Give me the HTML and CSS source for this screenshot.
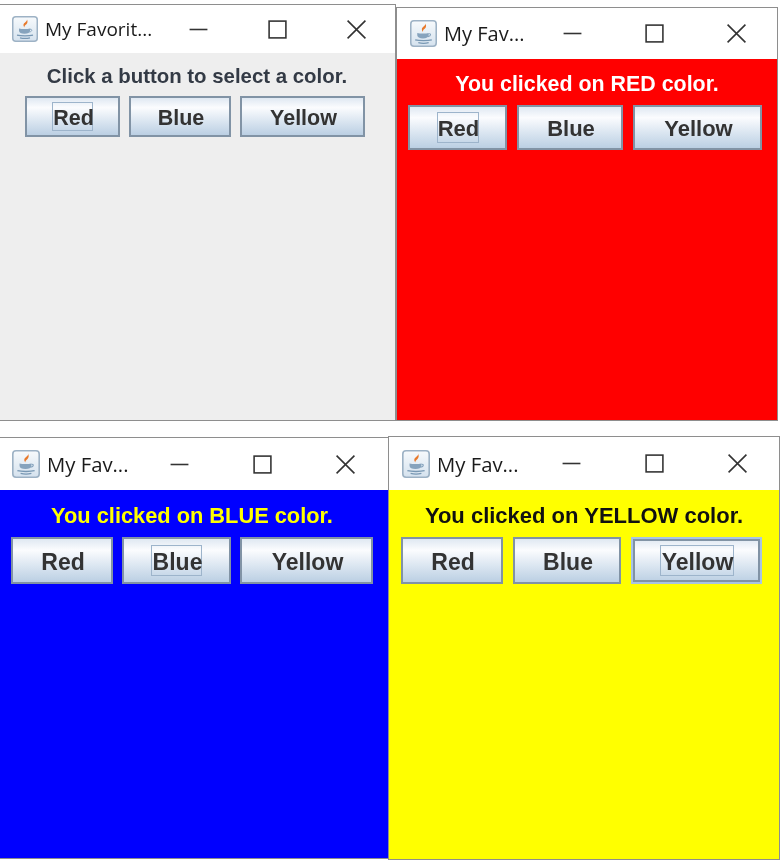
FILE: index.html
```html
<!DOCTYPE html>
<html lang="en">
<head>
    <meta charset="UTF-8">
    <meta name="viewport" content="width=device-width, initial-scale=1.0">
    <title>My Favorite Color</title>
    <link rel="stylesheet" href="styles.css">
</head>
<body>
    <svg class="sprite" width="0" height="0">
        <defs>
            <linearGradient id="icon-bg" x1="0" y1="0" x2="0" y2="1">
                <stop offset="0" stop-color="#f7fafc"/>
                <stop offset="1" stop-color="#d5e2ee"/>
            </linearGradient>
        </defs>
        <symbol id="java-icon" viewBox="0 0 26 26">
            <rect x="0.75" y="0.75" width="24.5" height="24.5" rx="3" fill="url(#icon-bg)" stroke="#9db2c5" stroke-width="1.500"/>
            <path d="M14.800 3c1.300 2.300-3.300 3.600-3.400 6 0 1 .5 1.800 1 2.500-.1-1.300.5-2 2-3.200 1.300-1.100 1.500-3.300.4-5.300z" fill="#e8792b"/>
            <path d="M7 12.500c2.800.8 8.200.8 11 0v2.200c0 2-2.200 3-5.500 3s-5.500-1-5.500-3z" fill="#86a3bd"/>
            <path d="M18 13.200c2.300-.4 2.700 2.300-.7 2.800" fill="none" stroke="#86a3bd" stroke-width="1"/>
            <path d="M5 19.200c3.800 1 12.200 1 16 0M8 21.800c2.500.6 7.500.6 10 0" fill="none" stroke="#7797b3" stroke-width="1.200"/>
        </symbol>
    </svg>

    <div class="window window-gray">
        <div class="titlebar">
            <svg class="app-icon"><use href="#java-icon"/></svg>
            <span class="title">My Favorit...</span>
            <div class="controls">
                <svg class="ctl" viewBox="0 0 20 20"><path d="M1.500 10h17"/></svg>
                <svg class="ctl" viewBox="0 0 20 20"><rect x="2" y="2" width="16" height="16"/></svg>
                <svg class="ctl" viewBox="0 0 20 20"><path d="M1.500 1.500l17 17M18.500 1.500l-17 17"/></svg>
            </div>
        </div>
        <div class="content">
            <p class="message">Click a button to select a color.</p>
            <div class="buttons">
                <button class="btn btn-red"><span class="focus"><span class="label">Red</span></span></button>
                <button class="btn btn-blue"><span class="label">Blue</span></button>
                <button class="btn btn-yellow"><span class="label">Yellow</span></button>
            </div>
        </div>
    </div>

    <div class="window window-red">
        <div class="titlebar">
            <svg class="app-icon"><use href="#java-icon"/></svg>
            <span class="title">My Fav...</span>
            <div class="controls">
                <svg class="ctl" viewBox="0 0 20 20"><path d="M1.500 10h17"/></svg>
                <svg class="ctl" viewBox="0 0 20 20"><rect x="2" y="2" width="16" height="16"/></svg>
                <svg class="ctl" viewBox="0 0 20 20"><path d="M1.500 1.500l17 17M18.500 1.500l-17 17"/></svg>
            </div>
        </div>
        <div class="content">
            <p class="message">You clicked on RED color.</p>
            <div class="buttons">
                <button class="btn btn-red"><span class="focus"><span class="label">Red</span></span></button>
                <button class="btn btn-blue"><span class="label">Blue</span></button>
                <button class="btn btn-yellow"><span class="label">Yellow</span></button>
            </div>
        </div>
    </div>

    <div class="window window-blue">
        <div class="titlebar">
            <svg class="app-icon"><use href="#java-icon"/></svg>
            <span class="title">My Fav...</span>
            <div class="controls">
                <svg class="ctl" viewBox="0 0 20 20"><path d="M1.500 10h17"/></svg>
                <svg class="ctl" viewBox="0 0 20 20"><rect x="2" y="2" width="16" height="16"/></svg>
                <svg class="ctl" viewBox="0 0 20 20"><path d="M1.500 1.500l17 17M18.500 1.500l-17 17"/></svg>
            </div>
        </div>
        <div class="content">
            <p class="message">You clicked on BLUE color.</p>
            <div class="buttons">
                <button class="btn btn-red"><span class="label">Red</span></button>
                <button class="btn btn-blue"><span class="focus"><span class="label">Blue</span></span></button>
                <button class="btn btn-yellow"><span class="label">Yellow</span></button>
            </div>
        </div>
    </div>

    <div class="window window-yellow">
        <div class="titlebar">
            <svg class="app-icon"><use href="#java-icon"/></svg>
            <span class="title">My Fav...</span>
            <div class="controls">
                <svg class="ctl" viewBox="0 0 20 20"><path d="M1.500 10h17"/></svg>
                <svg class="ctl" viewBox="0 0 20 20"><rect x="2" y="2" width="16" height="16"/></svg>
                <svg class="ctl" viewBox="0 0 20 20"><path d="M1.500 1.500l17 17M18.500 1.500l-17 17"/></svg>
            </div>
        </div>
        <div class="content">
            <p class="message">You clicked on YELLOW color.</p>
            <div class="buttons">
                <button class="btn btn-red"><span class="label">Red</span></button>
                <button class="btn btn-blue"><span class="label">Blue</span></button>
                <button class="btn btn-yellow btn-default"><span class="focus"><span class="label">Yellow</span></span></button>
            </div>
        </div>
    </div>
</body>
</html>
```

FILE: styles.css
```css
html, body {
    margin: 0;
    height: 100%;
    background: white;
    overflow: hidden;
}
.sprite {
    position: absolute;
}

/* windows sit on a free desktop, so these get absolute places */
.window {
    position: absolute;
    box-sizing: border-box;
    display: flex;
    flex-direction: column;
    border: 1px solid #8e8e8e;
    background: white;
    filter: blur(0.5px);
}
.window-gray {
    left: -2px;
    top: 4px;
    width: 398px;
    height: 417px;
    --title-h: 48px;
    --icon: 26px;
    --bg: #eeeeee;
    --fg: #333a45;
}
.window-red {
    left: 396px;
    top: 7px;
    width: 382px;
    height: 414px;
    --title-h: 51px;
    --icon: 27px;
    --bg: #ff0000;
    --fg: white;
}
.window-blue {
    left: -1px;
    top: 437px;
    width: 390px;
    height: 422px;
    --title-h: 52px;
    --icon: 28px;
    --bg: #0000ff;
    --fg: #ffff00;
}
.window-yellow {
    left: 388px;
    top: 436px;
    width: 392px;
    height: 424px;
    --title-h: 53px;
    --icon: 28px;
    --bg: #ffff00;
    --fg: #111111;
}

.titlebar {
    display: flex;
    align-items: center;
    height: var(--title-h);
    flex: none;
    background: white;
}
.app-icon {
    width: var(--icon);
    height: var(--icon);
    flex: none;
}
.title {
    font-family: "Open Sans", sans-serif;
    font-size: 20px;
    color: #1a1a1a;
    margin-left: 7px;
    white-space: nowrap;
}
.controls {
    display: flex;
    align-items: center;
    margin-left: auto;
}
.ctl {
    width: 21px;
    height: 21px;
    fill: none;
    stroke: #333333;
    stroke-width: 1.500;
}

.content {
    flex: 1;
    background: var(--bg);
    display: flex;
    flex-direction: column;
}
.message {
    margin: 0;
    box-sizing: border-box;
    text-align: center;
    font-family: "Liberation Sans", Arial, sans-serif;
    font-weight: bold;
    color: var(--fg);
    white-space: nowrap;
}
.buttons {
    display: flex;
}
.btn {
    box-sizing: border-box;
    flex: none;
    padding: 0;
    border: 2px solid #8193a5;
    background: linear-gradient(#dfe8f2 0%, #fbfcfe 26%, #dbe6f1 62%, #bbcfe3 100%);
    font-family: "Liberation Sans", Arial, sans-serif;
    font-weight: bold;
    color: #333333;
    display: flex;
    align-items: center;
    justify-content: center;
}
.focus {
    box-sizing: border-box;
    display: flex;
    align-items: center;
    justify-content: center;
    border: 1px solid #9db4cb;
    white-space: nowrap;
}
.label {
    padding: 3px 0 0 2px;
}
.btn-default {
    border: 2px solid #a9c4e4;
    outline: 2px solid #8193a5;
    outline-offset: -4px;
}

/* per window sizes, each shot was scaled a little differently */
.window-gray .titlebar { padding: 0 28px 0 13px; }
.window-gray .title { font-size: 19px; }
.window-gray .controls { gap: 58px; }
.window-gray .message { font-size: 20.400px; padding-top: 12px; height: 43px; line-height: 22px; }
.window-gray .buttons { padding-left: 26px; gap: 9px; }
.window-gray .btn { height: 41px; font-size: 21.500px; }
.window-gray .btn-red { width: 95px; }
.window-gray .btn-blue { width: 102px; }
.window-gray .btn-yellow { width: 125px; }
.window-gray .focus { width: 41px; height: 29px; }

.window-red .titlebar { padding: 0 30px 0 13px; }
.window-red .controls { gap: 61px; }
.window-red .message { font-size: 21.400px; padding-top: 13px; height: 46px; line-height: 24px; }
.window-red .buttons { padding-left: 11px; gap: 10px; }
.window-red .btn { height: 45px; font-size: 22px; }
.window-red .btn-red { width: 99px; }
.window-red .btn-blue { width: 106px; }
.window-red .btn-yellow { width: 129px; }
.window-red .focus { width: 42px; height: 31px; }

.window-blue .titlebar { padding: 0 32px 0 12px; }
.window-blue .title { font-size: 20.300px; }
.window-blue .controls { gap: 62px; }
.window-blue .message { font-size: 21.800px; padding: 14px 4px 0 0; height: 47px; line-height: 24px; }
.window-blue .buttons { padding-left: 11px; gap: 9px; }
.window-blue .btn { height: 47px; font-size: 23px; }
.window-blue .btn-red { width: 102px; }
.window-blue .btn-blue { width: 109px; }
.window-blue .btn-yellow { width: 133px; }
.window-blue .focus { width: 51px; height: 31px; }

.window-yellow .titlebar { padding: 0 31px 0 13px; }
.window-yellow .title { font-size: 20.300px; }
.window-yellow .controls { gap: 62px; }
.window-yellow .message { font-size: 22px; padding-top: 14px; height: 47px; line-height: 24px; }
.window-yellow .buttons { padding-left: 12px; gap: 10px; }
.window-yellow .btn { height: 47px; font-size: 23px; }
.window-yellow .btn-red { width: 102px; }
.window-yellow .btn-blue { width: 108px; }
.window-yellow .btn-yellow { width: 131px; }
.window-yellow .focus { width: 74px; height: 31px; }
```
